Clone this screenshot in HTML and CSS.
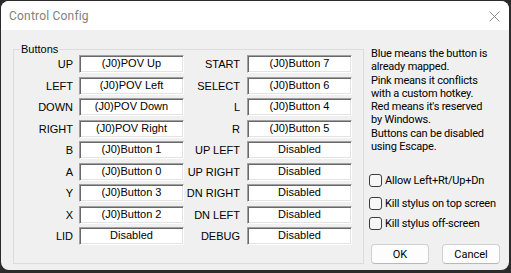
FILE: index.html
```html
<!DOCTYPE html>
<html lang="en">
<head>
  <meta charset="UTF-8" />
  <title>Control Config</title>
  <link rel="stylesheet" href="styles.css">
</head>
<body>
  <div class="window">
    <div class="titlebar">
      <span class="title">Control Config</span>
      <svg class="close" width="11" height="11" viewBox="0 0 11 11">
        <path d="M0.5 0.5 L10.5 10.5 M10.5 0.5 L0.5 10.5" stroke="#8c8c8c" stroke-width="1" fill="none"/>
      </svg>
    </div>
    <div class="content">
      <fieldset class="group">
        <legend>Buttons</legend>
        <div class="columns">
          <div class="col left">
            <div class="row"><span class="label">UP</span><span class="field">(J0)POV Up</span></div>
            <div class="row"><span class="label">LEFT</span><span class="field">(J0)POV Left</span></div>
            <div class="row"><span class="label">DOWN</span><span class="field">(J0)POV Down</span></div>
            <div class="row"><span class="label">RIGHT</span><span class="field">(J0)POV Right</span></div>
            <div class="row"><span class="label">B</span><span class="field">(J0)Button 1</span></div>
            <div class="row"><span class="label">A</span><span class="field">(J0)Button 0</span></div>
            <div class="row"><span class="label">Y</span><span class="field">(J0)Button 3</span></div>
            <div class="row"><span class="label">X</span><span class="field">(J0)Button 2</span></div>
            <div class="row"><span class="label">LID</span><span class="field">Disabled</span></div>
          </div>
          <div class="col right">
            <div class="row"><span class="label">START</span><span class="field">(J0)Button 7</span></div>
            <div class="row"><span class="label">SELECT</span><span class="field">(J0)Button 6</span></div>
            <div class="row"><span class="label">L</span><span class="field">(J0)Button 4</span></div>
            <div class="row"><span class="label">R</span><span class="field">(J0)Button 5</span></div>
            <div class="row"><span class="label">UP LEFT</span><span class="field">Disabled</span></div>
            <div class="row"><span class="label">UP RIGHT</span><span class="field">Disabled</span></div>
            <div class="row"><span class="label">DN RIGHT</span><span class="field">Disabled</span></div>
            <div class="row"><span class="label">DN LEFT</span><span class="field">Disabled</span></div>
            <div class="row"><span class="label">DEBUG</span><span class="field">Disabled</span></div>
          </div>
        </div>
      </fieldset>

      <div class="side">
        <p class="help">
          Blue means the button is<br>
          already mapped.<br>
          Pink means it conflicts<br>
          with a custom hotkey.<br>
          Red means it's reserved<br>
          by Windows.<br>
          Buttons can be disabled<br>
          using Escape.
        </p>
        <label class="check first"><span class="box"></span>Allow Left+Rt/Up+Dn</label>
        <label class="check second"><span class="box"></span>Kill stylus on top screen</label>
        <label class="check third"><span class="box"></span>Kill stylus off-screen</label>
        <div class="buttons">
          <button>OK</button>
          <button>Cancel</button>
        </div>
      </div>
    </div>
  </div>
</body>
</html>
```

FILE: styles.css
```css
body {
  margin: 0;
  background-color: #2b2b2b;
}

.window {
  margin: 1px 2px 3px 1px;
  width: 508px;
  height: 269px;
  border-radius: 8px;
  overflow: hidden;
  background-color: #f0f0f0;
  display: flex;
  flex-direction: column;
}

.titlebar {
  height: 29px;
  background-color: #fff;
  display: flex;
  align-items: center;
  justify-content: space-between;
  padding: 0 9px 0 8px;
}

.title {
  font-family: Roboto, sans-serif;
  font-size: 12px;
  letter-spacing: 0.2px;
  color: #808080;
}

.close {
  margin-top: 2px;
}

.content {
  display: flex;
  padding: 13px 0 0 12px;
}

.group {
  margin: 0;
  padding: 0 9px 4px 0;
  width: 340px;
  border: 1px solid #dcdcdc;
  font-family: "Liberation Sans", Arial, sans-serif;
  font-size: 11px;
}

.group legend {
  margin-left: 6px;
  padding: 0 1px;
  line-height: 12px;
  color: #000;
}

.columns {
  display: flex;
}

.col {
  display: flex;
  flex-direction: column;
  gap: 3.5px;
}

.row {
  display: flex;
  align-items: center;
  height: 18px;
}

.label {
  text-align: right;
  color: #000;
}

.left .label {
  width: 59px;
  margin-right: 6px;
}

.right .label {
  width: 56px;
  margin-right: 7px;
}

.field {
  box-sizing: border-box;
  width: 105px;
  height: 18px;
  line-height: 14px;
  text-align: center;
  background-color: #fff;
  border-top: 1px solid #a0a0a0;
  border-left: 1px solid #a0a0a0;
  border-bottom: 1px solid #fff;
  border-right: 1px solid #fff;
  box-shadow: inset 1px 1px 0 #696969, inset -1px -1px 0 #e3e3e3;
}

.side {
  margin-left: 7px;
  width: 132px;
  font-family: Roboto, sans-serif;
  font-size: 11px;
  letter-spacing: -0.2px;
  color: #000;
  white-space: nowrap;
  display: flex;
  flex-direction: column;
}

.help {
  margin: 4px 0 0;
  line-height: 13.3px;
}

.check {
  display: flex;
  align-items: center;
  height: 16px;
}

.check.first {
  margin-top: 19px;
}

.check.second {
  margin-top: 7px;
}

.check.third {
  margin-top: 4px;
}

.box {
  flex-shrink: 0;
  box-sizing: border-box;
  width: 13px;
  height: 13px;
  margin: 0 3px 0 -2px;
  border: 1px solid #3c3c3c;
  border-radius: 3px;
  background-color: #f7f7f7;
}

.buttons {
  display: flex;
  gap: 13px;
  margin-top: 13px;
}

.buttons button {
  box-sizing: border-box;
  width: 58px;
  height: 20px;
  padding: 0;
  font-family: Roboto, sans-serif;
  font-size: 11px;
  color: #000;
  background-color: #fdfdfd;
  border: 1px solid #d0d0d0;
  border-bottom-color: #b8b8b8;
  border-radius: 4px;
}
```
